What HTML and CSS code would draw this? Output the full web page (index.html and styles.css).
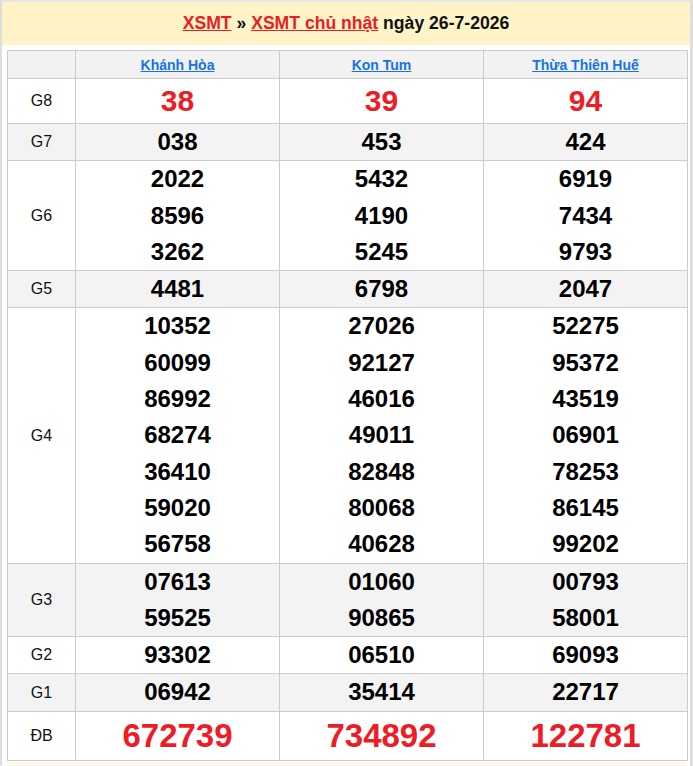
FILE: index.html
```html
<!DOCTYPE html>
<html lang="vi">
<head>
<meta charset="utf-8">
<title>XSMT chủ nhật</title>
<link rel="stylesheet" href="styles.css">
</head>
<body>
<div class="page">
  <div class="title">
    <a href="#" class="red">XSMT</a>&nbsp;»&nbsp;<a href="#" class="red">XSMT chủ nhật</a>&nbsp;ngày 26-7-2026
  </div>
  <div class="content">
    <table class="kq">
      <colgroup><col class="c-lbl"><col class="c-num"><col class="c-num"><col class="c-num"></colgroup>
      <tr class="head">
        <th></th>
        <th><a href="#">Khánh Hòa</a></th>
        <th><a href="#">Kon Tum</a></th>
        <th><a href="#">Thừa Thiên Huế</a></th>
      </tr>
      <tr class="g8">
        <td class="lbl">G8</td>
        <td><div class="n">38</div></td>
        <td><div class="n">39</div></td>
        <td><div class="n">94</div></td>
      </tr>
      <tr class="alt">
        <td class="lbl">G7</td>
        <td><div class="n">038</div></td>
        <td><div class="n">453</div></td>
        <td><div class="n">424</div></td>
      </tr>
      <tr>
        <td class="lbl">G6</td>
        <td><div class="n">2022</div><div class="n">8596</div><div class="n">3262</div></td>
        <td><div class="n">5432</div><div class="n">4190</div><div class="n">5245</div></td>
        <td><div class="n">6919</div><div class="n">7434</div><div class="n">9793</div></td>
      </tr>
      <tr class="alt">
        <td class="lbl">G5</td>
        <td><div class="n">4481</div></td>
        <td><div class="n">6798</div></td>
        <td><div class="n">2047</div></td>
      </tr>
      <tr>
        <td class="lbl">G4</td>
        <td><div class="n">10352</div><div class="n">60099</div><div class="n">86992</div><div class="n">68274</div><div class="n">36410</div><div class="n">59020</div><div class="n">56758</div></td>
        <td><div class="n">27026</div><div class="n">92127</div><div class="n">46016</div><div class="n">49011</div><div class="n">82848</div><div class="n">80068</div><div class="n">40628</div></td>
        <td><div class="n">52275</div><div class="n">95372</div><div class="n">43519</div><div class="n">06901</div><div class="n">78253</div><div class="n">86145</div><div class="n">99202</div></td>
      </tr>
      <tr class="alt">
        <td class="lbl">G3</td>
        <td><div class="n">07613</div><div class="n">59525</div></td>
        <td><div class="n">01060</div><div class="n">90865</div></td>
        <td><div class="n">00793</div><div class="n">58001</div></td>
      </tr>
      <tr>
        <td class="lbl">G2</td>
        <td><div class="n">93302</div></td>
        <td><div class="n">06510</div></td>
        <td><div class="n">69093</div></td>
      </tr>
      <tr class="alt">
        <td class="lbl">G1</td>
        <td><div class="n">06942</div></td>
        <td><div class="n">35414</div></td>
        <td><div class="n">22717</div></td>
      </tr>
      <tr class="db">
        <td class="lbl">ĐB</td>
        <td><div class="n">672739</div></td>
        <td><div class="n">734892</div></td>
        <td><div class="n">122781</div></td>
      </tr>
    </table>
    <div class="foot"></div>
  </div>
</div>
</body>
</html>
```
FILE: styles.css
```css
html, body {
  margin: 0;
  padding: 0;
  background: #fff;
}
body {
  font-family: "Liberation Sans", Arial, sans-serif;
  color: #000;
}
.page {
  width: 688px;
  border-left: 2px solid #dedede;
  border-right: 3px solid #dedede;
  border-top: 2px solid #e6e6e6;
}
.title {
  height: 43px;
  background: #fff3c7;
  display: flex;
  align-items: center;
  justify-content: center;
  font-size: 17.6px;
  font-weight: bold;
  color: #111;
}
.title a.red {
  color: #ea1d25;
  text-decoration: underline;
}
.content {
  padding: 5px 3px 0 5px;
}
.kq {
  border-collapse: collapse;
  table-layout: fixed;
  width: 679px;
}
.c-lbl { width: 68px; }
.c-num { width: 204px; }
.kq th, .kq td {
  border: 1px solid #cccccc;
  padding: 0;
  text-align: center;
  vertical-align: middle;
}
.kq .head th {
  background: #f2f2f2;
  height: 27px;
  font-size: 14px;
  font-weight: bold;
}
.kq .head a {
  color: #1672e6;
  text-decoration: underline;
}
.kq .alt td {
  background: #f3f3f3;
}
.lbl {
  font-size: 16px;
  color: #111;
}
.n {
  font-size: 24px;
  font-weight: bold;
  line-height: 36.3px;
  color: #000;
}
.g8 .n {
  font-size: 30px;
  line-height: 44px;
  color: #ee1c25;
}
.db .n {
  font-size: 33px;
  line-height: 48px;
  color: #ee1c25;
}
.foot {
  height: 12px;
  background: #fffaec;
  margin-top: 1px;
  width: 679px;
}
```
